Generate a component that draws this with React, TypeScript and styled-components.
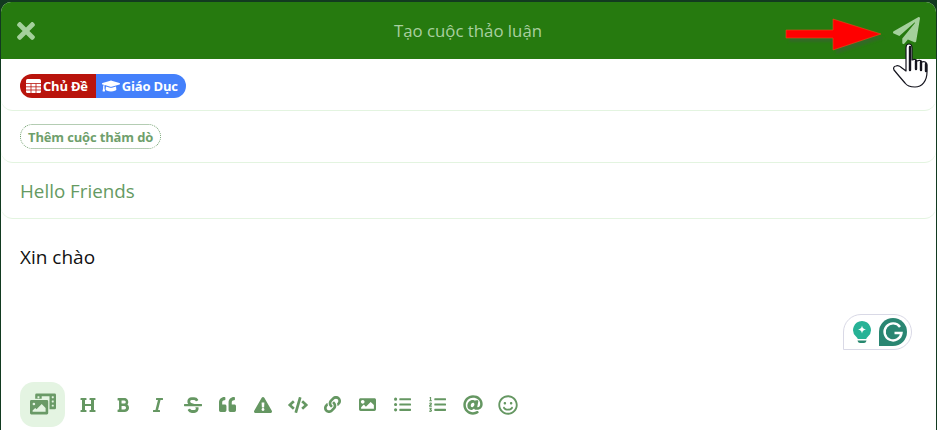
import styled, { createGlobalStyle } from "styled-components";
import {
  FaTimes,
  FaPaperPlane,
  FaGraduationCap,
  FaPhotoVideo,
  FaHeading,
  FaBold,
  FaItalic,
  FaStrikethrough,
  FaQuoteLeft,
  FaExclamationTriangle,
  FaCode,
  FaLink,
  FaImage,
  FaListUl,
  FaListOl,
  FaAt,
  FaRegSmile,
} from "react-icons/fa";

const GlobalStyle = createGlobalStyle`
  html, body {
    margin: 0;
    padding: 0;
    height: 100%;
    overflow: hidden;
    background: #123a20;
  }
  * { box-sizing: border-box; }
`;

const Modal = styled.div`
  position: relative;
  width: 935px;
  height: 428px;
  margin: 2px 0 0 1px;
  background: #fff;
  border-radius: 10px 10px 0 0;
  overflow: hidden;
  font-family: "Open Sans", "Noto Sans", sans-serif;
  display: flex;
  flex-direction: column;
`;

const Header = styled.div`
  height: 57px;
  flex: none;
  background: #267a0f;
  display: flex;
  align-items: center;
  justify-content: space-between;
  padding: 0 16px 0 12px;
  color: #a4d09c;
`;

const Title = styled.div`
  font-size: 16.8px;
  color: #a9d0a0;
  margin-left: 4px;
`;

const HeaderIcon = styled.div<{ $size: number }>`
  display: flex;
  font-size: ${(p) => p.$size}px;
`;

const Row = styled.div<{ $height: number; $top?: number }>`
  height: ${(p) => p.$height}px;
  flex: none;
  padding: ${(p) => p.$top ?? 0}px 19px 0;
  display: flex;
  align-items: center;
  border-bottom: 1px solid #e3f4e0;
  border-radius: 0 0 12px 12px;
`;

const Tag = styled.div<{ $bg: string; $left?: boolean }>`
  height: 24px;
  display: flex;
  align-items: center;
  gap: 2px;
  background: ${(p) => p.$bg};
  color: #fff;
  font-size: 13px;
  font-weight: 700;
  letter-spacing: -0.2px;
  padding: ${(p) => (p.$left ? "0 8px 0 6px" : "0 8px 0 6px")};
  border-radius: ${(p) => (p.$left ? "12px 0 0 12px" : "0 12px 12px 0")};
`;

const PollButton = styled.div`
  height: 25px;
  padding: 0 7px;
  display: flex;
  align-items: center;
  border: 1px dotted #6b9c68;
  border-radius: 13px;
  color: #6f9f6c;
  font-size: 13px;
  font-weight: 700;
  letter-spacing: -0.15px;
`;

const TitleText = styled.div`
  color: #659a62;
  font-size: 18.8px;
`;

const Body = styled.div`
  flex: 1;
  padding: 25px 19px 0;
  font-size: 19px;
  color: #111;
`;

const Toolbar = styled.div`
  flex: none;
  height: 46px;
  margin-bottom: 3px;
  padding-left: 19px;
  display: flex;
  align-items: center;
`;

const MediaButton = styled.div`
  width: 45px;
  height: 45px;
  border-radius: 14px;
  background: #e4f4e2;
  color: #6a9a67;
  font-size: 26px;
  display: flex;
  align-items: center;
  justify-content: center;
  margin-right: 5px;
`;

const Tool = styled.div<{ $size?: number }>`
  width: 35px;
  height: 45px;
  padding-top: 1px;
  display: flex;
  align-items: center;
  justify-content: center;
  color: #659762;
  font-size: ${(p) => p.$size ?? 16}px;
`;

const Overlay = styled.svg`
  position: absolute;
  left: 0;
  top: 0;
  pointer-events: none;
`;

const GrammarlyBadge = styled.div`
  position: absolute;
  left: 842px;
  top: 312px;
  width: 69px;
  height: 36px;
  background: #fff;
  border: 1px solid #d9d9e6;
  border-radius: 18px 18px 18px 0;
  display: flex;
  align-items: center;
  justify-content: space-between;
  padding: 0 4px 0 8px;
`;

const tools = [
  { Icon: FaHeading },
  { Icon: FaBold },
  { Icon: FaItalic },
  { Icon: FaStrikethrough, size: 18 },
  { Icon: FaQuoteLeft, size: 17 },
  { Icon: FaExclamationTriangle, size: 18 },
  { Icon: FaCode, size: 20 },
  { Icon: FaLink, size: 17 },
  { Icon: FaImage, size: 17 },
  { Icon: FaListUl, size: 17 },
  { Icon: FaListOl, size: 17 },
  { Icon: FaAt, size: 20 },
  { Icon: FaRegSmile, size: 20 },
];

export default function App() {
  return (
    <>
      <GlobalStyle />
      <Modal>
        <Header>
          <HeaderIcon $size={26}>
            <FaTimes />
          </HeaderIcon>
          <Title>Tạo cuộc thảo luận</Title>
          <HeaderIcon $size={27}>
            <FaPaperPlane />
          </HeaderIcon>
        </Header>
        <Row $height={52} $top={2}>
          <Tag $bg="#b9140c" $left>
            <svg width="15" height="14" viewBox="0 0 15 14">
              <rect width="15" height="14" rx="1.500" fill="#fff" />
              <path d="M0 4.500h15M0 7.800h15M0 11h15M5 4.500V14M10 4.500V14" stroke="#b9140c" strokeWidth="0.800" />
            </svg>
            Chủ Đề
          </Tag>
          <Tag $bg="#4480fb">
            <FaGraduationCap size={18} />
            Giáo Dục
          </Tag>
        </Row>
        <Row $height={52}>
          <PollButton>Thêm cuộc thăm dò</PollButton>
        </Row>
        <Row $height={56}>
          <TitleText>Hello Friends</TitleText>
        </Row>
        <Body>Xin chào</Body>
        <Toolbar>
          <MediaButton>
            <FaPhotoVideo />
          </MediaButton>
          {tools.map(({ Icon, size }, i) => (
            <Tool key={i} $size={size}>
              <Icon />
            </Tool>
          ))}
        </Toolbar>

        <GrammarlyBadge>
          <svg width="20" height="24" viewBox="0 0 20 24">
            <path d="M10 1a9 9 0 0 1 6 15.600c-1 1-1.500 1.600-1.700 2.400H5.700c-.2-.8-.7-1.400-1.700-2.400A9 9 0 0 1 10 1z" fill="#27b296" />
            <path d="M10 5.500c.5 2.600 1.400 3.500 4 4-2.600.5-3.500 1.400-4 4-.5-2.600-1.400-3.500-4-4 2.600-.5 3.500-1.400 4-4z" fill="#fff" />
            <path d="M5.500 20.500h9c-.3 1.700-1.500 2.500-2.500 2.500H8c-1 0-2.200-.8-2.500-2.500z" fill="#27886f" />
          </svg>
          <svg width="28" height="28" viewBox="0 0 28 28">
            <path d="M14 0a14 14 0 1 1 0 28H0V14A14 14 0 0 1 14 0z" fill="#2a8672" />
            <path d="M21 9a8.500 8.500 0 1 0 1.500 6h-7" fill="none" stroke="#fff" strokeWidth="2.400" />
          </svg>
        </GrammarlyBadge>

        <Overlay width="935" height="428" viewBox="0 0 935 428">
          <defs>
            <filter id="arrowBlur">
              <feGaussianBlur stdDeviation="1" />
            </filter>
          </defs>
          <path
            d="M785 28h47v-11l48 15-48 16v-12h-47z"
            fill="#3d5f38"
            opacity="0.55"
            filter="url(#arrowBlur)"
            transform="translate(3 4)"
          />
          <path d="M785 28h47v-11l48 15-48 16v-12h-47z" fill="#ff0000" stroke="#e0501a" strokeWidth="0.600" />
          <path
            d="M914 85c-5 0-8-1-10-4l-6-7-5-6c-1-2 0-4 2-4 2-1 4 0 6 2l4 3V46c0-2 1-4 3-4s3 2 3 4v12c2-1 4-1 5 1 2-1 4-1 5 1 2-1 5 0 5 3v7c0 9-5 15-12 15z"
            fill="#fff"
            stroke="#14141e"
            strokeWidth="1.200"
            strokeLinejoin="round"
          />
          <path d="M909 45v23M915 59v8M920 60v8M925 62v7" stroke="#14141e" strokeWidth="2.400" fill="none" strokeLinecap="round" />
        </Overlay>
      </Modal>
    </>
  );
}
